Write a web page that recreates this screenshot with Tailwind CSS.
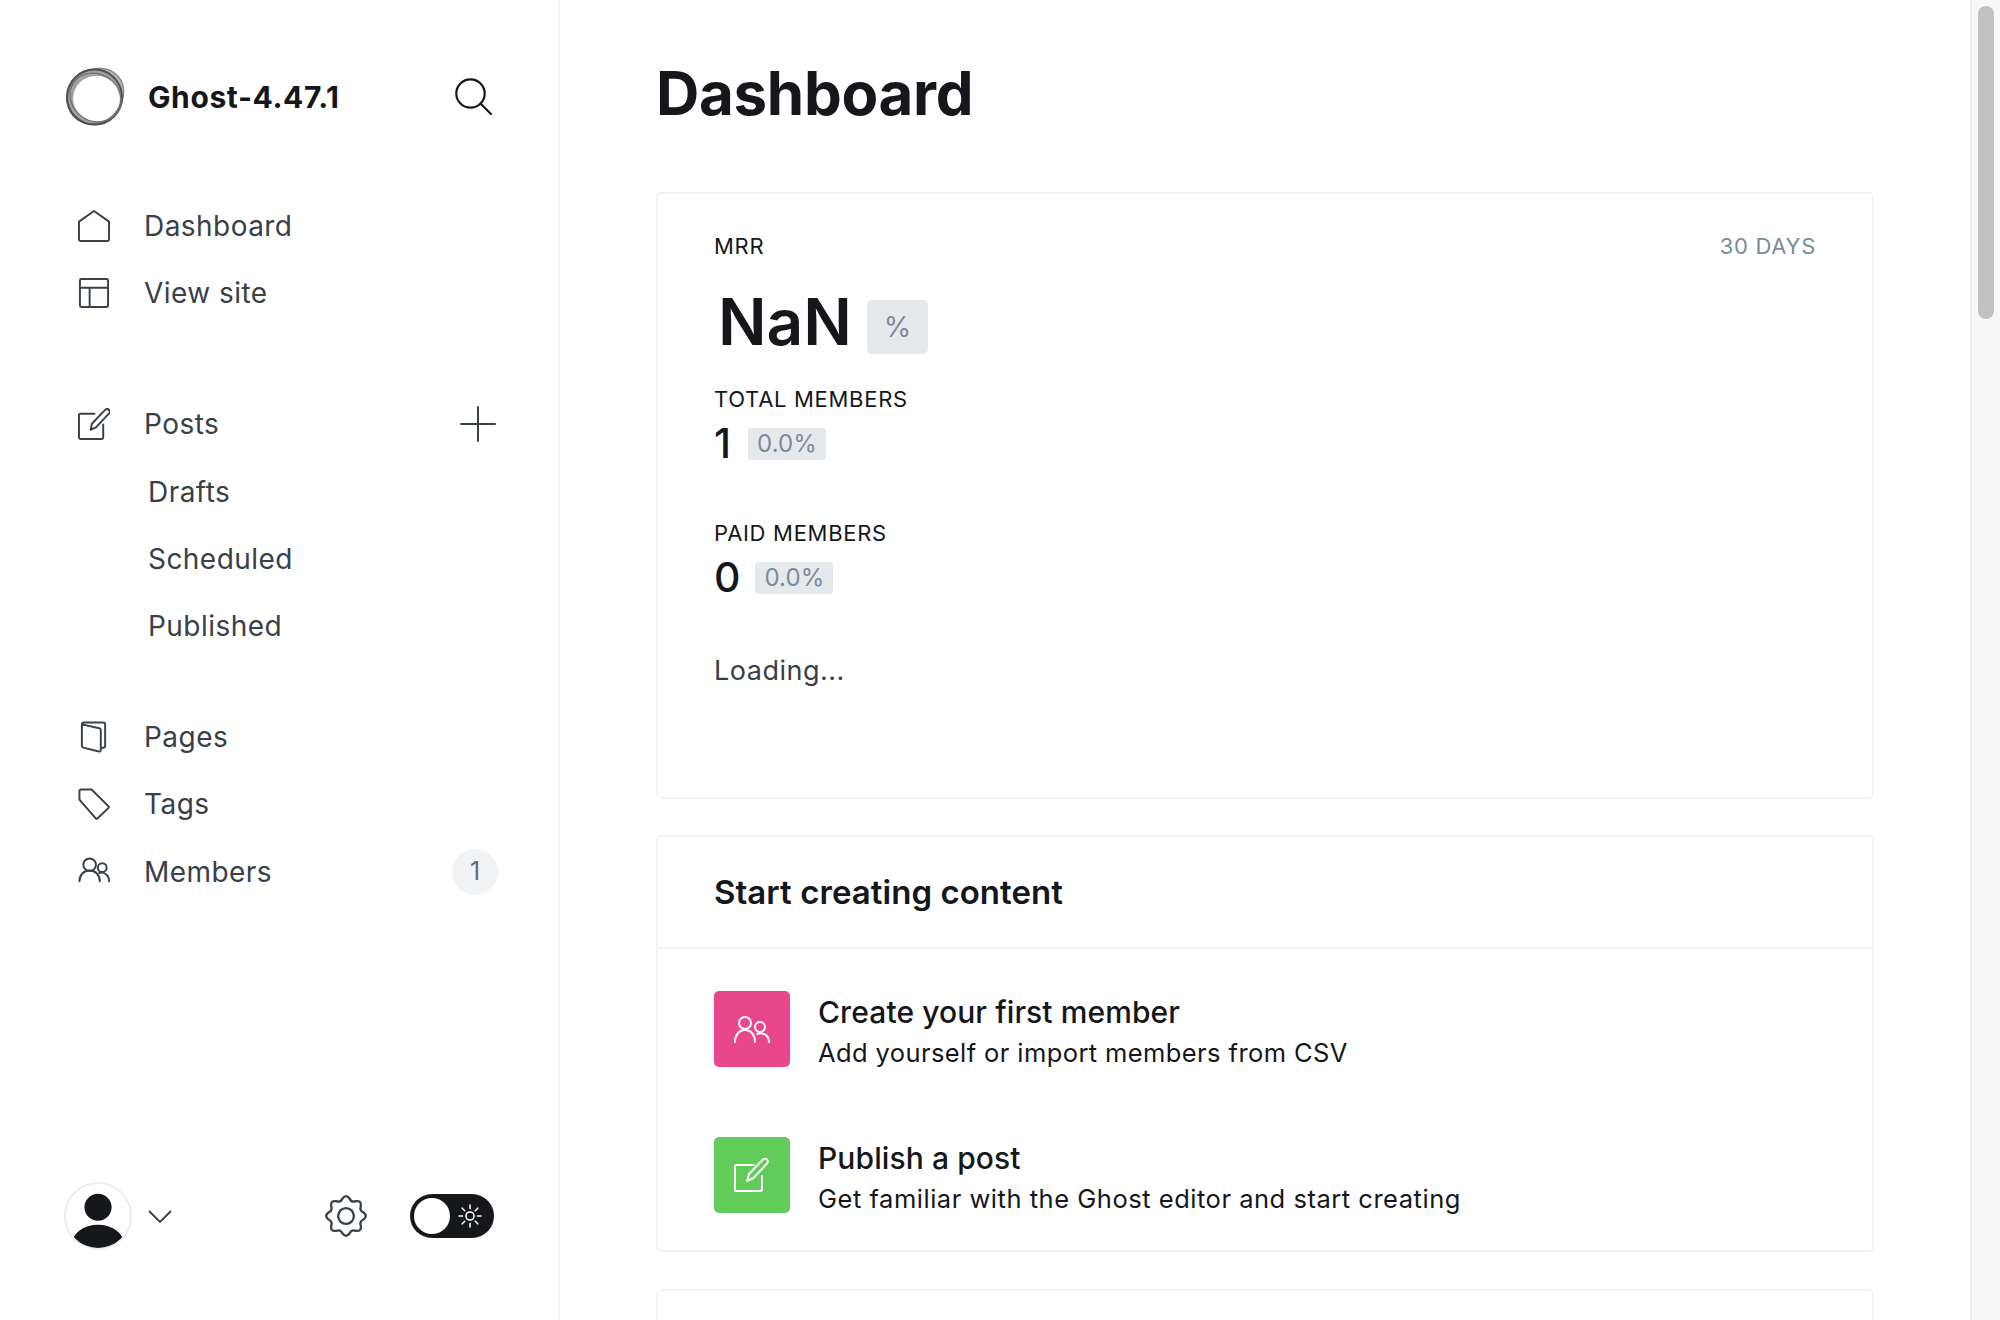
<!DOCTYPE html>
<html lang="en">
<head>
    <meta charset="UTF-8">
    <title>Dashboard - Ghost-4.47.1</title>
    <script src="https://cdn.jsdelivr.net/npm/@tailwindcss/browser@4"></script>
</head>
<body class="bg-white font-['Inter',sans-serif] text-[#15171a]">
<div class="flex h-[1320px] w-[2000px] overflow-hidden">

    <!-- sidebar -->
    <aside class="w-[560px] h-full shrink-0 border-r-2 border-[#f1f3f4] flex flex-col text-[#394047] text-[28px] tracking-[0.45px]">
        <div class="flex items-center h-[60px] mt-[66px] ml-[65px]">
            <svg class="w-[61px] h-[61px]" viewBox="0 0 60 60" fill="none">
                <ellipse cx="30" cy="29.500" rx="30" ry="26" transform="rotate(-42 30 29.500)" fill="#b4b4b4"/>
                <circle cx="29" cy="30.500" r="28" fill="#a2a2a2"/>
                <ellipse cx="31" cy="32" rx="23" ry="22.500" fill="#fff"/>
                <ellipse cx="30" cy="29.500" rx="29.500" ry="25.500" transform="rotate(-42 30 29.500)" stroke="#808080" stroke-width="1"/>
                <circle cx="29" cy="30.500" r="27" stroke="#505050" stroke-width="2"/>
                <ellipse cx="30" cy="31" rx="26" ry="23" transform="rotate(35 30 31)" stroke="#6e6e6e" stroke-width="1.200"/>
            </svg>
            <span class="ml-[22px] mt-[3px] text-[30px] font-bold text-[#15171a] tracking-[0.6px]">Ghost-4.47.1</span>
            <svg class="w-[37px] h-[37px] ml-auto mr-[66px]" viewBox="0 0 37 37" fill="none" stroke="#15171a" stroke-width="2.200" stroke-linecap="round">
                <circle cx="15.500" cy="15.500" r="14.200"/>
                <path d="M25.500 25.500 36 36"/>
            </svg>
        </div>

        <nav class="mt-[66px] ml-[78px] mr-[61px]">
            <a class="h-[67px] flex items-center">
                <svg class="w-[32px] h-[32px]" viewBox="0 0 33 33" fill="none" stroke="#394047" stroke-width="2" stroke-linejoin="round">
                    <path d="M1 12 16.500 1 32 12v18.500a1.500 1.500 0 0 1-1.500 1.500h-28A1.500 1.500 0 0 1 1 30.500Z"/>
                </svg>
                <span class="ml-[34px]">Dashboard</span>
            </a>
            <a class="h-[67px] flex items-center">
                <svg class="w-[32px] h-[32px]" viewBox="0 0 33 33" fill="none" stroke="#394047" stroke-width="2" stroke-linejoin="round">
                    <rect x="2" y="2" width="29" height="29" rx="1.500"/>
                    <path d="M2 11h29M12 11v20"/>
                </svg>
                <span class="ml-[34px]">View site</span>
            </a>
        </nav>

        <nav class="mt-[64px] ml-[78px] mr-[61px]">
            <a class="h-[67px] flex items-center">
                <svg class="w-[32px] h-[32px]" viewBox="0 0 33 33" fill="none" stroke="#394047" stroke-width="2" stroke-linejoin="round" stroke-linecap="round">
                    <path d="M17 6H2.500A1.500 1.500 0 0 0 1 7.500v23A1.500 1.500 0 0 0 2.500 32h22a1.500 1.500 0 0 0 1.500-1.500V17"/>
                    <path d="M13 22.500 14.500 16 28 2a2.600 2.600 0 0 1 4 3.500L18.500 20Z"/>
                </svg>
                <span class="ml-[34px]">Posts</span>
                <svg class="w-[36px] h-[36px] ml-auto mr-[1px]" viewBox="0 0 36 36" fill="none" stroke="#394047" stroke-width="2" stroke-linecap="round">
                    <path d="M18 1v34M1 18h34"/>
                </svg>
            </a>
            <a class="h-[67px] mt-[1px] flex items-center pl-[70px]">Drafts</a>
            <a class="h-[67px] flex items-center pl-[70px]">Scheduled</a>
            <a class="h-[67px] flex items-center pl-[70px]">Published</a>
        </nav>

        <nav class="mt-[44px] ml-[78px] mr-[60px]">
            <a class="h-[67px] flex items-center">
                <svg class="w-[32px] h-[32px]" viewBox="0 0 33 33" fill="none" stroke="#394047" stroke-width="2" stroke-linejoin="round">
                    <path d="M4 3.500 22 7.500a2 2 0 0 1 1.500 2V30a1.500 1.500 0 0 1-2 1.500L5.500 27.500A2 2 0 0 1 4 25.500V3.500a2 2 0 0 1 2-2h20a2 2 0 0 1 2 2v22a2 2 0 0 1-2 2h-2.500"/>
                </svg>
                <span class="ml-[34px]">Pages</span>
            </a>
            <a class="h-[67px] flex items-center">
                <svg class="w-[32px] h-[32px]" viewBox="0 0 33 33" fill="none" stroke="#394047" stroke-width="2" stroke-linejoin="round">
                    <path d="M1.500 3a1.500 1.500 0 0 1 1.500-1.500H14L31.500 19a1 1 0 0 1 0 1.500L20 31.500a1 1 0 0 1-1.500 0L1.500 12Z"/>
                </svg>
                <span class="ml-[34px]">Tags</span>
            </a>
            <a class="h-[67px] mt-[1px] flex items-center">
                <svg class="w-[32px] h-[32px]" viewBox="0 0 33 33" fill="none" stroke="#394047" stroke-width="2" stroke-linecap="round">
                    <circle cx="12" cy="9" r="6.500"/>
                    <path d="M1.500 26c0-6.500 4.500-11 10.500-11s10.500 4.500 10.500 11"/>
                    <circle cx="25" cy="12" r="4.500"/>
                    <path d="M22 17.500c5-1.500 10 2 10 8.500"/>
                </svg>
                <span class="ml-[34px]">Members</span>
                <span class="ml-auto w-[46px] h-[46px] rounded-full bg-[#f1f3f4] flex items-center justify-center text-[25px] text-[#626d79] tracking-normal">1</span>
            </a>
        </nav>

        <div class="mt-auto mb-[70px] ml-[64px] flex items-center h-[68px]">
            <div class="w-[68px] h-[68px] rounded-full border-2 border-[#ebeef0] overflow-hidden">
                <svg class="w-full h-full" viewBox="0 0 66 66">
                    <circle cx="33" cy="24" r="14" fill="#15171a"/>
                    <ellipse cx="33" cy="62" rx="27" ry="20" fill="#15171a"/>
                </svg>
            </div>
            <svg class="w-[24px] h-[14px] ml-[16px] mt-[2px]" viewBox="0 0 24 14" fill="none" stroke="#394047" stroke-width="1.800" stroke-linecap="round">
                <path d="M1.500 1.500 12 12 22.500 1.500"/>
            </svg>
            <svg class="w-[42px] h-[42px] ml-[153px] overflow-visible" viewBox="0 0 40 40" fill="none" stroke="#394047" stroke-width="2.200" stroke-linejoin="round">
                <circle cx="20" cy="20" r="7.500"/>
                <path d="M16.680 3.320Q20 -1 23.320 3.320Q25.170 7.530 29.450 5.870Q34.850 5.150 34.130 10.550Q32.470 14.830 36.680 16.680Q41 20 36.680 23.320Q32.470 25.170 34.130 29.450Q34.850 34.850 29.450 34.130Q25.170 32.470 23.320 36.680Q20 41 16.680 36.680Q14.830 32.470 10.550 34.130Q5.150 34.850 5.870 29.450Q7.530 25.170 3.320 23.320Q-1 20 3.320 16.680Q7.530 14.830 5.870 10.550Q5.150 5.150 10.550 5.870Q14.830 7.530 16.680 3.320Z"/>
            </svg>
            <div class="ml-[43px] w-[84px] h-[44px] rounded-full bg-[#15171a] flex items-center px-[4px]">
                <span class="w-[36px] h-[36px] rounded-full bg-white"></span>
                <svg class="w-[24px] h-[24px] ml-[8px]" viewBox="0 0 24 24" fill="none" stroke="#fff" stroke-width="1.600" stroke-linecap="round">
                    <circle cx="12" cy="12" r="4"/>
                    <path d="M12 1v3.500M12 19.500V23M1 12h3.500M19.500 12H23M4.200 4.200l2.500 2.500M17.300 17.300l2.500 2.500M4.200 19.800l2.500-2.500M17.300 6.700l2.500-2.500"/>
                </svg>
            </div>
        </div>
    </aside>

    <!-- main -->
    <main class="flex-1 h-full overflow-hidden pl-[96px] pr-[96px]">
        <h1 class="text-[60px] leading-[72px] font-bold mt-[57px] tracking-[-0.3px]">Dashboard</h1>

        <section class="mt-[63px] h-[607px] border-2 border-[#f1f3f4] rounded-[5px] px-[56px] pt-[40px]">
            <div class="flex justify-between text-[22px] leading-[24px] tracking-[0.7px]">
                <span>MRR</span>
                <span class="text-[#7c8b9a]">30 DAYS</span>
            </div>
            <div class="flex items-center mt-[28px] h-[72px]">
                <span class="ml-[4px] text-[64px] font-semibold">NaN</span>
                <span class="ml-[15px] mt-[10px] w-[61px] h-[54px] rounded-[5px] bg-[#e6e9eb] text-[#7c8b9a] text-[28px] flex items-center justify-center">%</span>
            </div>
            <div class="mt-[29px] text-[22px] leading-[24px] tracking-[0.7px]">TOTAL MEMBERS</div>
            <div class="flex items-center mt-[13px] h-[40px]">
                <span class="text-[41px] font-medium">1</span>
                <span class="ml-[17px] px-[9px] h-[32px] rounded-[4px] bg-[#e6e9eb] text-[#7c8b9a] text-[24px] tracking-[0.1px] flex items-center">0.0%</span>
            </div>
            <div class="mt-[57px] text-[22px] leading-[24px] tracking-[0.7px]">PAID MEMBERS</div>
            <div class="flex items-center mt-[13px] h-[40px]">
                <span class="text-[41px] font-medium">0</span>
                <span class="ml-[15px] px-[9px] h-[32px] rounded-[4px] bg-[#e6e9eb] text-[#7c8b9a] text-[24px] tracking-[0.1px] flex items-center">0.0%</span>
            </div>
            <div class="mt-[53px] text-[27px] text-[#394047] tracking-[0.5px]">Loading...</div>
        </section>

        <section class="mt-[36px] h-[417px] border-2 border-[#f1f3f4] rounded-[5px]">
            <h2 class="h-[112px] flex items-center px-[56px] pt-[2px] text-[33px] font-semibold border-b-2 border-[#f1f3f4] tracking-[0.05px]">Start creating content</h2>
            <div class="px-[56px] pt-[42px] flex flex-col gap-[70px]">
                <div class="flex items-center h-[76px]">
                    <div class="w-[76px] h-[76px] rounded-[5px] bg-[#e9478c] flex items-center justify-center">
                        <svg class="w-[36px] h-[27px]" viewBox="0 0 36 27" fill="none" stroke="#fff" stroke-width="2" stroke-linecap="round">
                            <circle cx="11" cy="7" r="6"/>
                            <path d="M1 26c0-7 4-12 10-12s10 5 10 12"/>
                            <circle cx="26" cy="11" r="5"/>
                            <path d="M23 18c6-2 12 1 12 8"/>
                        </svg>
                    </div>
                    <div class="ml-[28px] pt-[6px]">
                        <div class="text-[30px] leading-[40px] font-medium tracking-[0.1px]">Create your first member</div>
                        <div class="text-[25.500px] leading-[41px] tracking-[0.4px]">Add yourself or import members from CSV</div>
                    </div>
                </div>
                <div class="flex items-center h-[76px]">
                    <div class="w-[76px] h-[76px] rounded-[5px] bg-[#62cc5b] flex items-center justify-center">
                        <svg class="w-[36px] h-[36px]" viewBox="0 0 36 36" fill="none" stroke="#fff" stroke-width="2" stroke-linejoin="round" stroke-linecap="round">
                            <path d="M20 8H2.500A1.500 1.500 0 0 0 1 9.500v23A1.500 1.500 0 0 0 2.500 34h24a1.500 1.500 0 0 0 1.500-1.500V19"/>
                            <path d="M13 24 15 17 29 2.500a2.800 2.800 0 0 1 4 4L19.500 21Z"/>
                        </svg>
                    </div>
                    <div class="ml-[28px] pt-[6px]">
                        <div class="text-[30px] leading-[40px] font-medium tracking-[0.1px]">Publish a post</div>
                        <div class="text-[25.500px] leading-[41px] tracking-[0.52px]">Get familiar with the Ghost editor and start creating</div>
                    </div>
                </div>
            </div>
        </section>

        <section class="mt-[37px] h-[100px] border-2 border-[#f1f3f4] rounded-[5px]"></section>
    </main>

    <!-- scrollbar -->
    <div class="w-[30px] h-full shrink-0 bg-[#f8f8f8] border-l-2 border-[#eeeeee] pt-[6px] pl-[6px]">
        <div class="w-[16px] h-[313px] rounded-full bg-[#c1c1c1]"></div>
    </div>
</div>
</body>
</html>
